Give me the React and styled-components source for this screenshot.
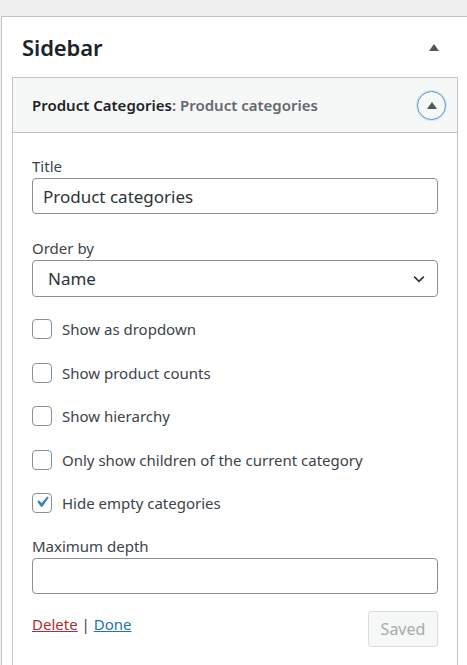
import React from 'react'
import styled, { createGlobalStyle } from 'styled-components'

const Global = createGlobalStyle`
  html, body {
    margin: 0;
    padding: 0;
    background: #f0f0f0;
    overflow: hidden;
  }
  body {
    font-family: "Noto Sans", "Open Sans", "Liberation Sans", sans-serif;
    color: #3c434a;
  }
`

const Page = styled.div`
  padding: 16px 0 0 1px;
  height: 665px;
  box-sizing: border-box;
`

const SidebarBox = styled.div`
  width: 468px;
  height: 100%;
  box-sizing: border-box;
  background: #fff;
  border: 1px solid #c3c4c7;
  border-bottom: none;
`

const SidebarHead = styled.div`
  display: flex;
  align-items: center;
  justify-content: space-between;
  height: 60px;
  padding: 0 29px 0 20px;
`

const SidebarTitle = styled.h2`
  margin: 0;
  font-size: 22px;
  font-weight: 600;
  color: #1d2327;
  letter-spacing: -0.1px;
`

const Arrow = styled.span`
  width: 0;
  height: 0;
  border-left: 5px solid transparent;
  border-right: 5px solid transparent;
  border-bottom: 7px solid #50575e;
`

const Widget = styled.div`
  margin: 0 10px;
  border: 1px solid #c3c4c7;
  border-bottom: none;
  height: 600px;
`

const WidgetHead = styled.div`
  display: flex;
  align-items: center;
  justify-content: space-between;
  height: 54px;
  padding: 0 11px 0 19px;
  background: #f6f7f7;
  border-bottom: 1px solid #c3c4c7;
`

const WidgetTitle = styled.h3`
  margin: 0;
  font-size: 15px;
  font-weight: 600;
  color: #1d2327;
`

const InTitle = styled.span`
  color: #646970;
`

const Toggle = styled.button`
  width: 29px;
  height: 29px;
  border-radius: 50%;
  border: 1px solid #4f94d4;
  background: transparent;
  display: flex;
  align-items: center;
  justify-content: center;
  padding: 0;
  box-shadow: 0 0 0 1px rgba(79, 148, 212, 0.2);
`

const Body = styled.div`
  padding: 23px 19px 0 19px;
  display: flex;
  flex-direction: column;
`

const Field = styled.div`
  display: flex;
  flex-direction: column;
  gap: 2px;
  margin-bottom: ${p => p.$mb || 24}px;
`

const Label = styled.label`
  font-size: 15px;
  color: #3c434a;
  line-height: 20px;
`

const TextInput = styled.div`
  height: 36px;
  box-sizing: border-box;
  border: 1px solid #8c8f94;
  border-radius: 4px;
  padding: 0 10px;
  display: flex;
  align-items: center;
  font-size: 17px;
  color: #2c3338;
`

const Select = styled(TextInput)`
  height: 37px;
  justify-content: space-between;
  padding: 0 10px 0 15px;
  color: #2c3338;
`

const Checks = styled.div`
  display: flex;
  flex-direction: column;
  gap: 23.5px;
  margin-bottom: 23px;
`

const CheckRow = styled.div`
  display: flex;
  align-items: center;
  gap: 10px;
  font-size: 15px;
  color: #3c434a;
  height: 20px;
`

const Box = styled.span`
  width: 20px;
  height: 20px;
  box-sizing: border-box;
  border: 1px solid #8c8f94;
  border-radius: 4px;
  display: flex;
  align-items: center;
  justify-content: center;
  background: #fff;
`

const Actions = styled.div`
  display: flex;
  justify-content: space-between;
  align-items: flex-start;
  margin-top: -1px;
`

const Links = styled.div`
  font-size: 15px;
  color: #3c434a;
  padding-top: 3px;
`

const Link = styled.a`
  color: ${p => p.$danger ? '#b32d2e' : '#2271b1'};
  text-decoration: underline;
`

const SavedButton = styled.button`
  width: 70px;
  height: 36px;
  border: 1px solid #dcdcde;
  border-radius: 3px;
  background: #f6f7f7;
  color: #a7aaad;
  font-family: inherit;
  font-size: 16px;
  padding: 0;
`

const checks = [
  { label: 'Show as dropdown' },
  { label: 'Show product counts' },
  { label: 'Show hierarchy' },
  { label: 'Only show children of the current category' },
  { label: 'Hide empty categories', checked: true },
]

export default function App() {
  return (
    <Page>
      <Global />
      <SidebarBox>
        <SidebarHead>
          <SidebarTitle>Sidebar</SidebarTitle>
          <Arrow />
        </SidebarHead>
        <Widget>
          <WidgetHead>
            <WidgetTitle>
              Product Categories<InTitle>: Product categories</InTitle>
            </WidgetTitle>
            <Toggle>
              <Arrow />
            </Toggle>
          </WidgetHead>
          <Body>
            <Field>
              <Label>Title</Label>
              <TextInput>Product categories</TextInput>
            </Field>
            <Field $mb={22}>
              <Label>Order by</Label>
              <Select>
                Name
                <svg width="16" height="16" viewBox="0 0 20 20">
                  <path d="M4 7l6 6 6-6" fill="none" stroke="#2c3338" strokeWidth="2" />
                </svg>
              </Select>
            </Field>
            <Checks>
              {checks.map(c => (
                <CheckRow key={c.label}>
                  <Box>
                    {c.checked && (
                      <svg width="22" height="22" viewBox="0 0 20 20" style={{ margin: '-2px -2px 0 -2px' }}>
                        <path d="M14.83 4.89l1.34.94-5.81 8.38H9.02L5.78 9.67l1.34-1.25 2.57 2.4z" fill="#3582c4" />
                      </svg>
                    )}
                  </Box>
                  {c.label}
                </CheckRow>
              ))}
            </Checks>
            <Field $mb={18}>
              <Label>Maximum depth</Label>
              <TextInput />
            </Field>
            <Actions>
              <Links>
                <Link $danger>Delete</Link> | <Link>Done</Link>
              </Links>
              <SavedButton>Saved</SavedButton>
            </Actions>
          </Body>
        </Widget>
      </SidebarBox>
    </Page>
  )
}
